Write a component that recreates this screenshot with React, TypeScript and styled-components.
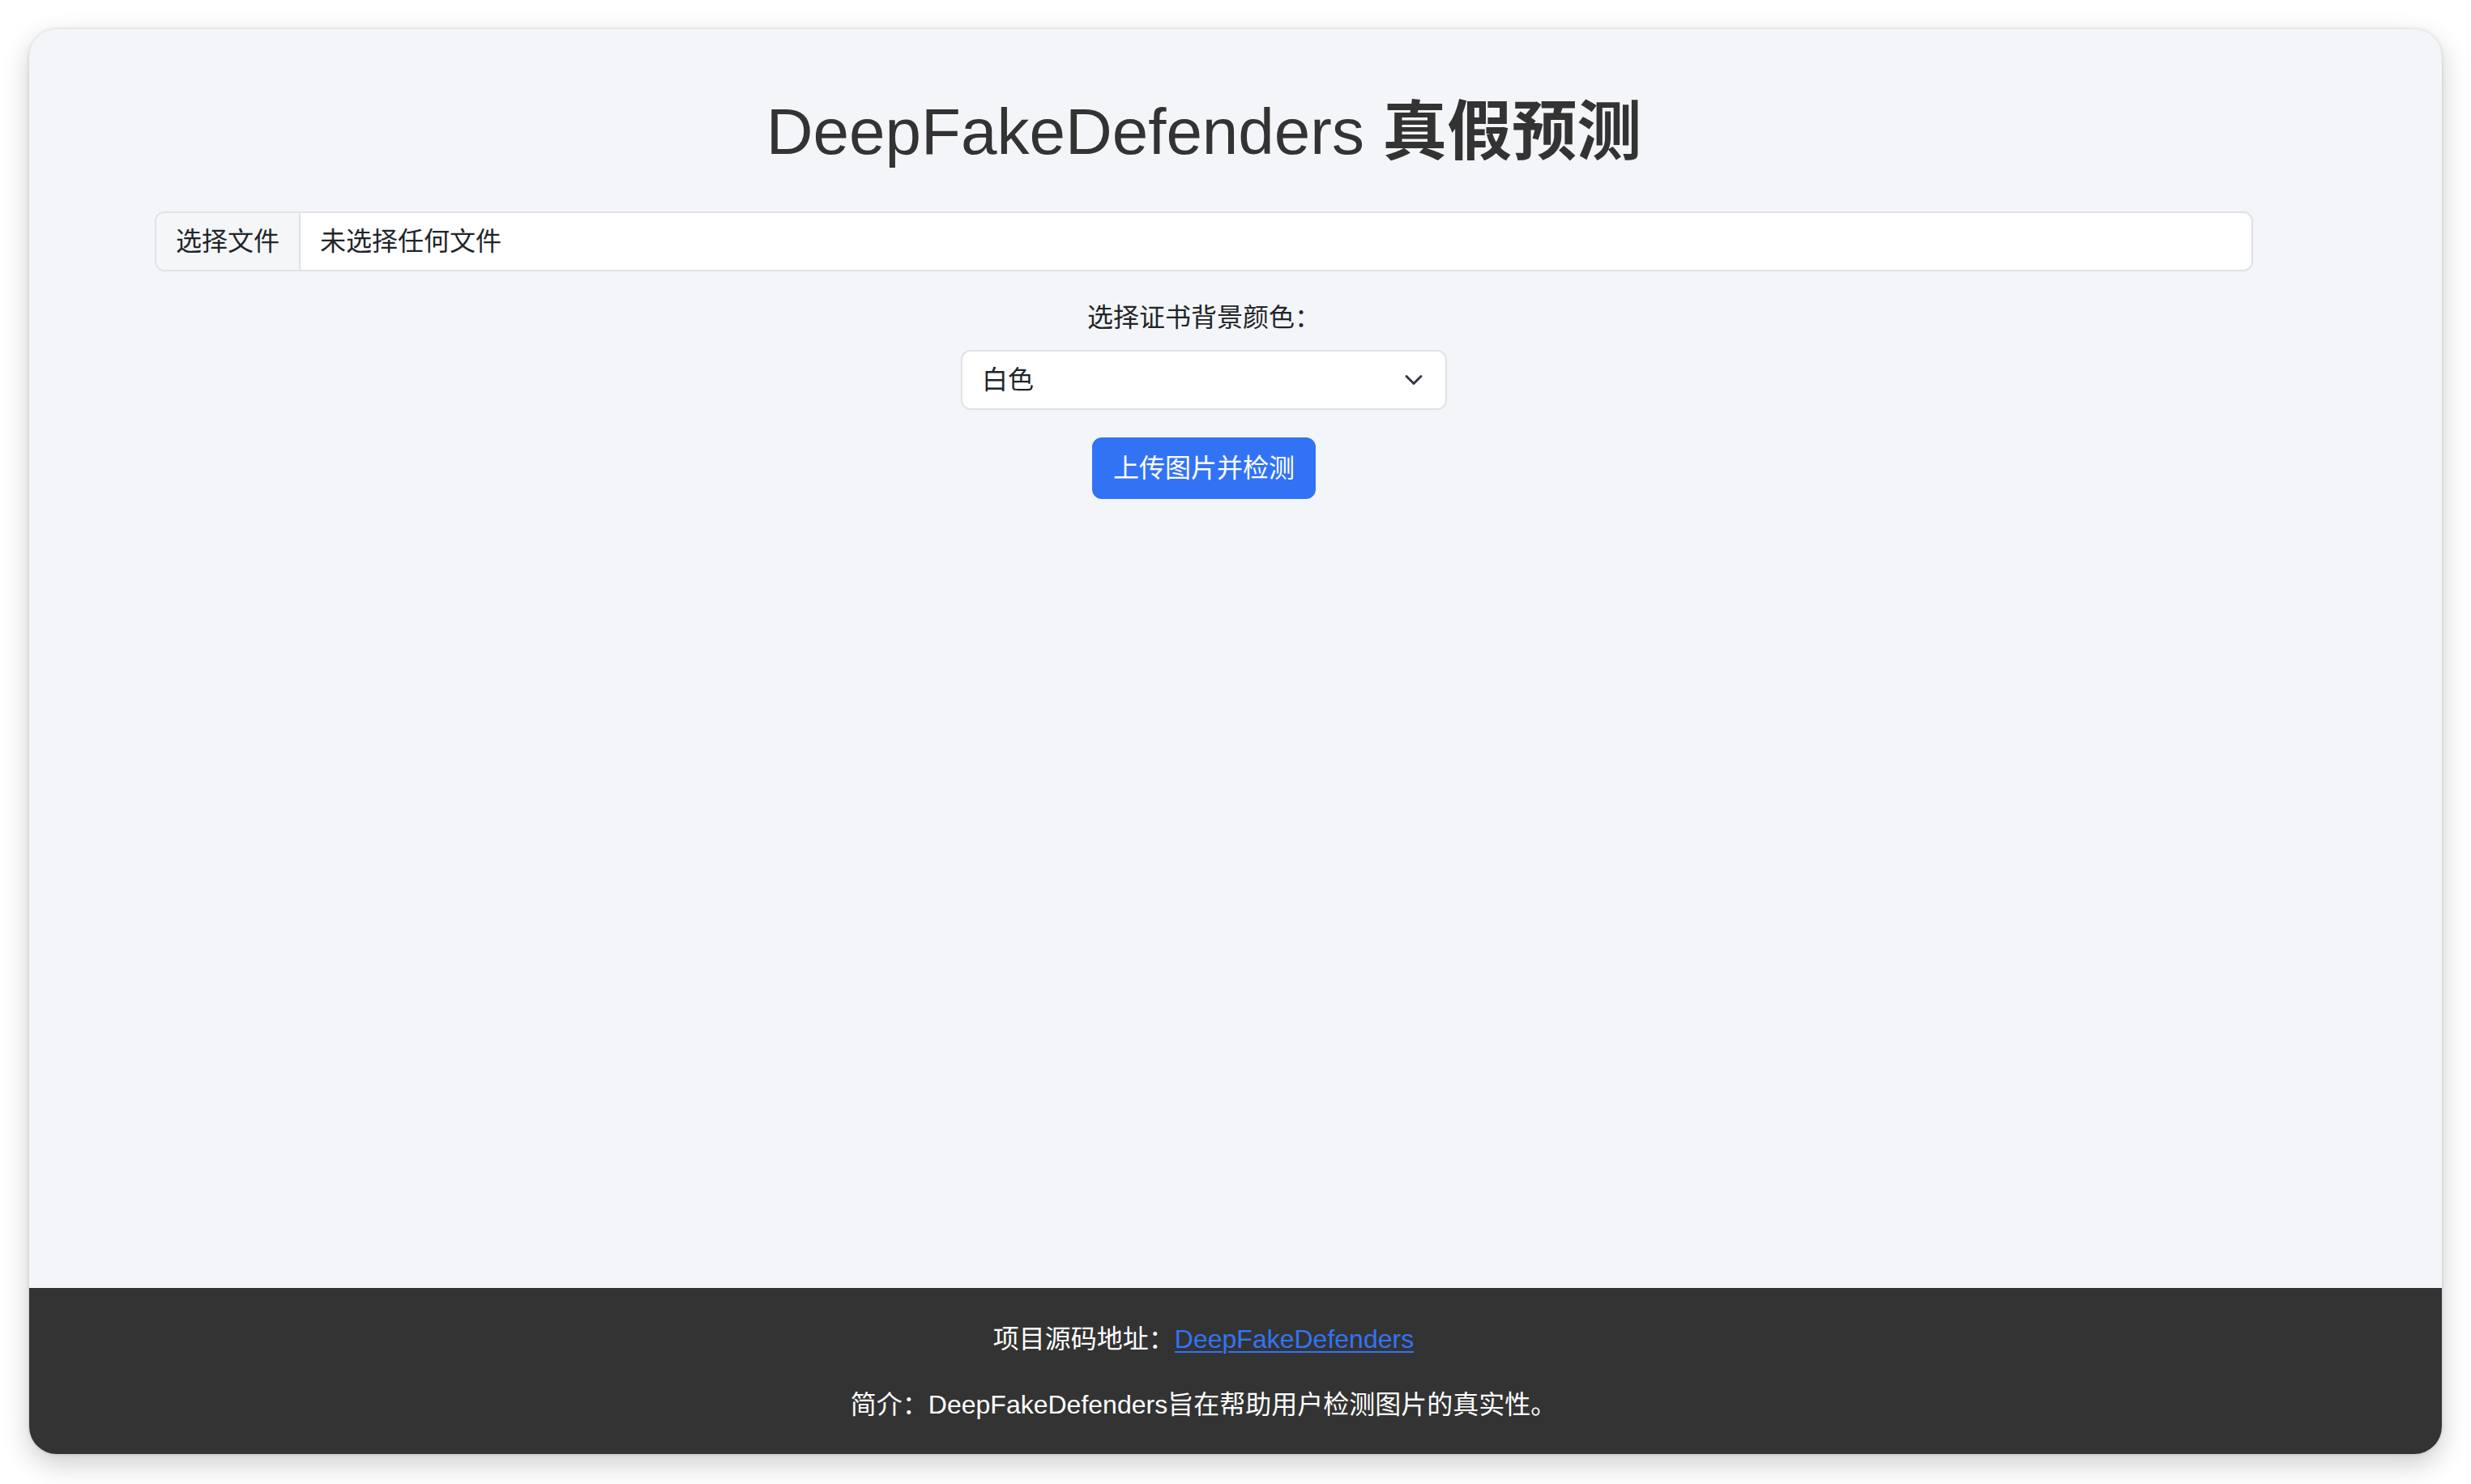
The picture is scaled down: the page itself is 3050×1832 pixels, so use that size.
import React from "react";
import styled, { createGlobalStyle } from "styled-components";

const GlobalStyle = createGlobalStyle`
  html, body {
    margin: 0;
    padding: 0;
    background: #ffffff;
  }
  body {
    font-family: "Liberation Sans", "Noto Sans CJK SC", Arial, sans-serif;
    color: #212529;
  }
  * {
    box-sizing: border-box;
  }
`;

const Desktop = styled.div`
  padding: 36px 36px 37px 36px;
`;

const Window = styled.div`
  height: 1759px;
  border-radius: 34px;
  overflow: hidden;
  background: #f4f5f9;
  display: flex;
  flex-direction: column;
  box-shadow: 0 12px 34px rgba(0, 0, 0, 0.2), 0 0 4px rgba(0, 0, 0, 0.14);
`;

const Main = styled.main`
  flex: 1;
  padding: 79px 233px 0 155px;
  display: flex;
  flex-direction: column;
  align-items: center;
`;

const Title = styled.h1`
  margin: 0 0 50px 0;
  font-size: 80px;
  line-height: 96px;
  font-weight: 400;
  color: #333333;
  text-align: center;

  span {
    font-weight: 700;
  }
`;

const FileGroup = styled.label`
  align-self: stretch;
  height: 74px;
  display: flex;
  align-items: stretch;
  background: #ffffff;
  border: 2px solid #dee2e6;
  border-radius: 12px;
  overflow: hidden;
  font-size: 32px;
  line-height: 48px;
  margin-bottom: 33px;
  cursor: pointer;

  input {
    display: none;
  }
`;

const FileButton = styled.span`
  display: flex;
  align-items: center;
  padding: 0 24px;
  background: #f5f6f8;
  border-right: 2px solid #dee2e6;
  color: #212529;
`;

const FileName = styled.span`
  display: flex;
  align-items: center;
  padding: 0 24px;
  color: #212529;
`;

const FieldLabel = styled.label`
  font-size: 32px;
  line-height: 48px;
  margin-bottom: 16px;
  color: #212529;
`;

const SelectWrap = styled.div`
  position: relative;
  width: 600px;
  margin-bottom: 34px;
`;

const Select = styled.select`
  width: 100%;
  height: 74px;
  appearance: none;
  -webkit-appearance: none;
  background: #ffffff;
  border: 2px solid #dee2e6;
  border-radius: 12px;
  padding: 0 72px 0 24px;
  font-family: "Liberation Sans", "Noto Sans CJK SC", Arial, sans-serif;
  font-size: 32px;
  line-height: 48px;
  color: #212529;
  outline: none;
`;

const Chevron = styled.svg`
  position: absolute;
  right: 29px;
  top: 50%;
  transform: translateY(-50%);
  pointer-events: none;
`;

const UploadButton = styled.button`
  height: 76px;
  padding: 0 24px;
  border: 2px solid #3273f6;
  border-radius: 12px;
  background: #3273f6;
  color: #ffffff;
  font-family: "Liberation Sans", "Noto Sans CJK SC", Arial, sans-serif;
  font-size: 32px;
  line-height: 48px;
  cursor: pointer;
`;

const Footer = styled.footer`
  background: #333333;
  color: #ffffff;
  padding: 39px 79px 37px 0;
  display: flex;
  flex-direction: column;
  align-items: center;
  gap: 33px;
  font-size: 32px;
  line-height: 48px;
`;

const FooterLine = styled.p`
  margin: 0;
  text-align: center;

  a {
    color: #3273f6;
    text-decoration: underline;
    text-underline-offset: 4px;
    text-decoration-thickness: 2px;
  }
`;

const App: React.FC = () => {
  return (
    <>
      <GlobalStyle />
      <Desktop>
        <Window>
          <Main>
            <Title>
              DeepFakeDefenders <span>真假预测</span>
            </Title>
            <FileGroup>
              <input type="file" accept="image/*" />
              <FileButton>选择文件</FileButton>
              <FileName>未选择任何文件</FileName>
            </FileGroup>
            <FieldLabel htmlFor="bg-color">选择证书背景颜色：</FieldLabel>
            <SelectWrap>
              <Select id="bg-color" defaultValue="white">
                <option value="white">白色</option>
                <option value="blue">蓝色</option>
                <option value="red">红色</option>
              </Select>
              <Chevron width="24" height="24" viewBox="0 0 16 16">
                <path
                  d="M2 5l6 6 6-6"
                  fill="none"
                  stroke="#343a40"
                  strokeWidth="2"
                  strokeLinecap="round"
                  strokeLinejoin="round"
                />
              </Chevron>
            </SelectWrap>
            <UploadButton type="button">上传图片并检测</UploadButton>
          </Main>
          <Footer>
            <FooterLine>
              项目源码地址：<a href="#">DeepFakeDefenders</a>
            </FooterLine>
            <FooterLine>简介：DeepFakeDefenders旨在帮助用户检测图片的真实性。</FooterLine>
          </Footer>
        </Window>
      </Desktop>
    </>
  );
};

export default App;
